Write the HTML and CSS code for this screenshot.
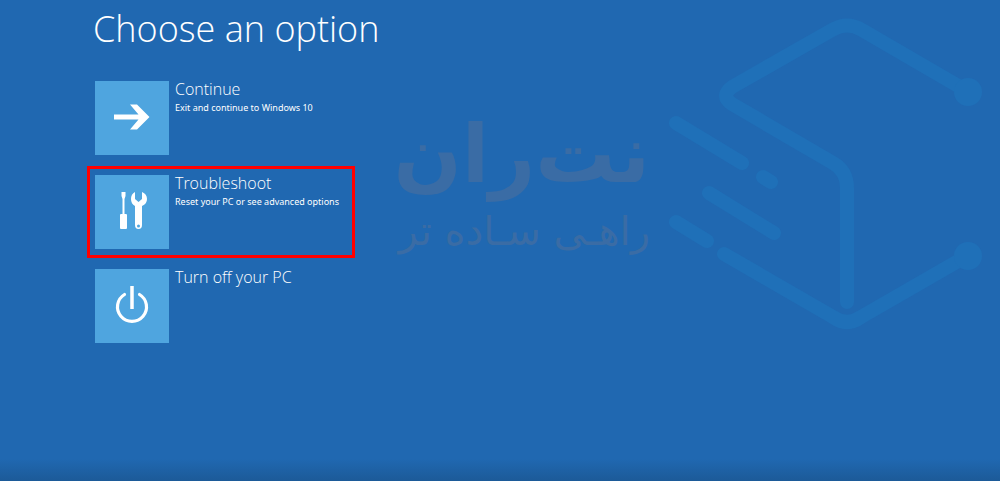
FILE: index.html
```html
<!DOCTYPE html>
<html lang="en">
<head>
    <meta charset="UTF-8">
    <title>Choose an option</title>
    <link rel="stylesheet" href="styles.css">
</head>
<body>

<div class="watermark" lang="fa" dir="rtl">
    <div class="brand">
        <div class="brand-name">نت&zwnj;ران</div>
        <div class="brand-slogan">راهـی سـاده تر</div>
    </div>
    <svg class="brand-logo" width="350" height="350" viewBox="0 0 350 350" aria-hidden="true">
        <g fill="none" stroke="#1f70b8" stroke-width="14" stroke-linecap="round" stroke-linejoin="round">
            <path d="M310 87L212 30Q197 21 182 30L82 87Q70 96 82 104L183 163Q197 171 197 188V302"/>
            <path d="M74 254L183 317Q197 327 211 317L310 260"/>
            <path d="M26 123L92 163M113 177L121 182M59 193L124 233M26 222L57 241"/>
        </g>
        <circle cx="318" cy="92" r="14" fill="#1f70b8"/>
        <circle cx="318" cy="256" r="14" fill="#1f70b8"/>
    </svg>
</div>

<main class="screen">
    <h1>Choose an option</h1>
    <div class="options">
        <button class="option" type="button">
            <span class="tile">
                <svg width="74" height="74" viewBox="0 0 74 74" aria-hidden="true">
                    <path d="M19 33.500H43.500L35 23.500H42L54.500 36L42 48.500H35L43.500 38.500H19Z" fill="#fff"/>
                </svg>
            </span>
            <span class="label">
                <span class="title">Continue</span>
                <span class="note">Exit and continue to Windows 10</span>
            </span>
        </button>
        <button class="option selected" type="button">
            <span class="tile">
                <svg width="74" height="74" viewBox="0 0 74 74" aria-hidden="true">
                    <path d="M26.500 17H30.500V21L29.500 24V39H31Q32 39 32 40V53Q32 54 31 54H26Q25 54 25 53V40Q25 39 26 39H27.500V24L26.500 21Z" fill="#fff"/>
                    <path d="M40 17Q36 19 36 24Q36 29 40 31V50Q40 54 43.500 54Q47 54 47 50V31Q52 29 52 24Q52 19 47 17V24L43.500 27L40 24Z" fill="#fff"/>
                    <circle cx="43.500" cy="51" r="1.500" fill="#4fa5df"/>
                </svg>
            </span>
            <span class="label">
                <span class="title">Troubleshoot</span>
                <span class="note">Reset your PC or see advanced options</span>
            </span>
        </button>
        <button class="option" type="button">
            <span class="tile">
                <svg width="74" height="74" viewBox="0 0 74 74" aria-hidden="true">
                    <path d="M29.500 25.500A14.500 14.500 0 1 0 44.500 25.500" fill="none" stroke="#fff" stroke-width="3.200" stroke-linecap="round"/>
                    <path d="M37 17V40" fill="none" stroke="#fff" stroke-width="3.500"/>
                </svg>
            </span>
            <span class="label">
                <span class="title">Turn off your PC</span>
            </span>
        </button>
    </div>
</main>

</body>
</html>
```
FILE: styles.css
```css
body {
    margin: 0;
    min-height: 100vh;
    position: relative;
    overflow-x: hidden;
    font-family: "Noto Sans", "Open Sans", sans-serif;
    color: #fff;
    background: linear-gradient(to top, #1c5a98, #2068b1 22px);
}
.screen {
    position: relative;
    padding: 4px 87px 40px;
}
h1 {
    margin: 0 0 18px 6px;
    font-family: "Open Sans", sans-serif;
    font-size: 36px;
    font-weight: 300;
    line-height: 50px;
}
.options {
    display: flex;
    flex-direction: column;
    align-items: flex-start;
    gap: 2px;
}
.option {
    display: flex;
    gap: 6px;
    min-width: 268px;
    padding: 6px 5px;
    border: 3px solid transparent;
    background: none;
    color: #fff;
    font-family: inherit;
    text-align: left;
    cursor: pointer;
}
.selected {
    border-color: #f00; /* highlighted step */
}
.tile {
    width: 74px;
    height: 74px;
    background-color: #4fa5df;
}
.tile svg {
    display: block;
}
.label {
    display: flex;
    flex-direction: column;
}
.title {
    font-family: "Open Sans", sans-serif;
    font-size: 16px;
    font-weight: 300;
    line-height: 16px;
    margin-bottom: 3px;
}
.note {
    font-size: 9px;
    line-height: 16px;
}

/* Faded logo behind the menu */
.watermark {
    position: absolute;
    top: 0;
    right: 0;
    display: flex;
    flex-direction: row-reverse;
    color: #3a6ca5;
}
.brand {
    padding-top: 104px;
    font-family: "DejaVu Sans", sans-serif;
    white-space: nowrap;
}
.brand-name {
    font-size: 80px;
    font-weight: bold;
    line-height: 102px;
}
.brand-slogan {
    font-size: 40px;
    line-height: 50px;
}
```
